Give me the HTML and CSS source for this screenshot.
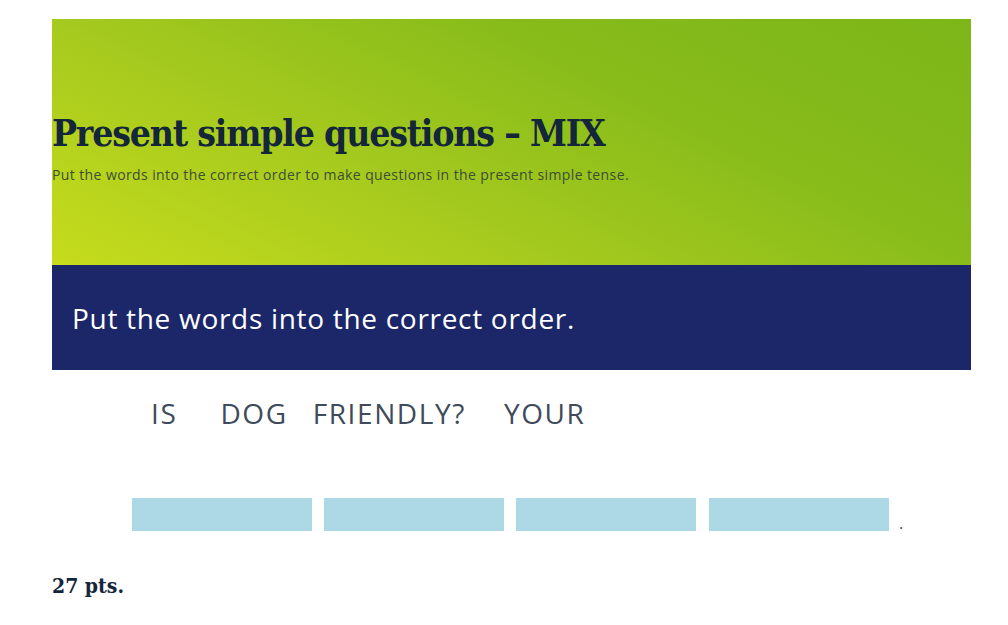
FILE: index.html
```html
<!DOCTYPE html>
<html lang="en">
<head>
<meta charset="utf-8">
<title>Present simple questions – MIX</title>
<link rel="stylesheet" href="styles.css">
</head>
<body>
<main class="page">
  <header class="hero">
    <h1 class="hero-title">Present simple questions – MIX</h1>
    <p class="hero-sub">Put the words into the correct order to make questions in the present simple tense.</p>
  </header>
  <section class="task">
    <h2 class="task-title">Put the words into the correct order.</h2>
  </section>
  <div class="words">
    <span class="word w1">IS</span>
    <span class="word w2">DOG</span>
    <span class="word w3">FRIENDLY?</span>
    <span class="word w4">YOUR</span>
  </div>
  <div class="slots">
    <span class="slot"></span>
    <span class="slot"></span>
    <span class="slot"></span>
    <span class="slot"></span>
    <span class="dot">.</span>
  </div>
  <p class="points">27 pts.</p>
</main>
</body>
</html>
```

FILE: styles.css
```css
html, body {
  margin: 0;
  padding: 0;
  background: #ffffff;
}
.page {
  width: 919px;
  margin: 19px 0 0 52px;
}
.hero {
  height: 246px;
  background: linear-gradient(26deg, #c6dc1c 0%, #a6ca1e 35%, #86bb1a 68%, #7db619 100%);
  padding-top: 92px;
  box-sizing: border-box;
}
.hero-title {
  margin: 0;
  font-family: "DejaVu Serif Condensed", "DejaVu Serif", serif;
  font-weight: bold;
  font-size: 37px;
  line-height: 44px;
  color: #13263a;
  letter-spacing: -1.2px;
}
.hero-sub {
  margin: 11px 0 0;
  font-family: "Open Sans", sans-serif;
  font-size: 14px;
  line-height: 18px;
  letter-spacing: 0.4px;
  color: #3d4d36;
}
.task {
  height: 105px;
  background: #1b2769;
  display: flex;
  align-items: center;
  padding-left: 20px;
}
.task-title {
  margin: 0;
  font-family: "Open Sans", sans-serif;
  font-weight: normal;
  font-size: 28px;
  letter-spacing: 0.7px;
  color: #ffffff;
}
.words {
  display: flex;
  align-items: center;
  height: 86px;
  padding-left: 99px;
  font-family: "Open Sans", sans-serif;
  font-size: 28px;
  letter-spacing: 1.6px;
  color: #3f4b5c;
}
.w2 { margin-left: 43px; }
.w3 { margin-left: 25px; }
.w4 { margin-left: 38px; }
.slots {
  display: flex;
  align-items: flex-end;
  gap: 12px;
  margin-top: 42px;
  padding-left: 80px;
}
.slot {
  width: 180px;
  height: 33px;
  background: #add8e6;
}
.slot:nth-child(4) { margin-left: 1px; }
.dot {
  font-family: "Open Sans", sans-serif;
  font-size: 16px;
  color: #444;
  line-height: 16px;
  margin-left: -2px;
}
.points {
  margin: 42px 0 0;
  font-family: "DejaVu Serif Condensed", "DejaVu Serif", serif;
  font-weight: bold;
  font-size: 21px;
  color: #13263a;
}
```
